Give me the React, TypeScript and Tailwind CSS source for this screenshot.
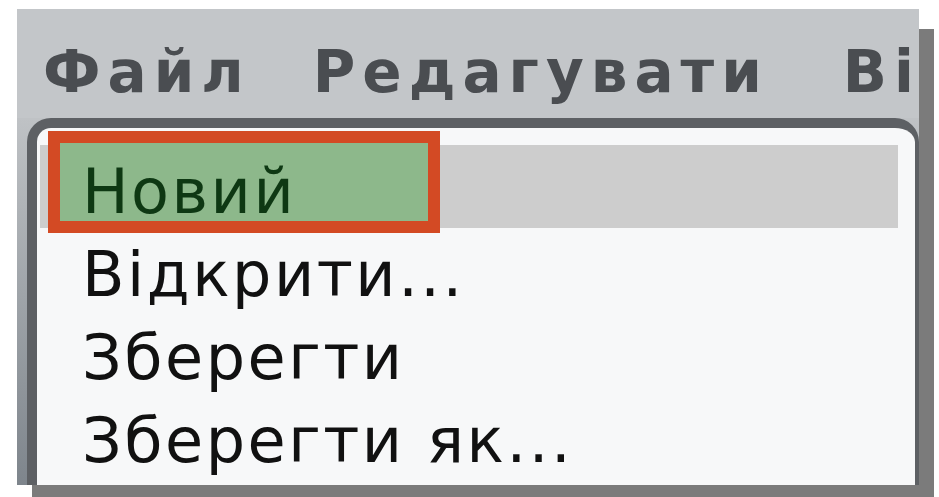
export default function App() {
  const items = ["Відкрити...", "Зберегти", "Зберегти як..."]

  return (
    <div className="w-[939px] h-[497px] overflow-hidden bg-white pl-[17px] pt-[9px] font-['DejaVu_Sans',sans-serif]">
      {/* window snapshot with its drop shadow */}
      <div className="flex h-[476px] w-[902px] flex-col bg-[#c3c6c9] shadow-[15px_20px_0_#7b7b7b]">
        {/* menu bar */}
        <div className="flex h-[109px] shrink-0 gap-[62px] overflow-hidden whitespace-nowrap pl-[26px] pt-[34px] text-[58px] font-bold leading-none tracking-[7px] text-[#4a4d51]">
          <span>Файл</span>
          <span>Редагувати</span>
          <span className="ml-[12px]">Ві</span>
        </div>

        {/* dropdown under "Файл" */}
        <div className="flex flex-1 flex-col bg-gradient-to-b from-[#bfc2c5] to-[#7e858c] pl-[10px]">
          <div className="flex-1 rounded-t-[24px] border-l-[10px] border-r-[4px] border-t-[10px] border-[#5d6064] bg-[#f7f8f9] pt-[17px] text-[62px] tracking-[2.5px] text-[#111]">
            <div className="relative ml-[3px] mr-[17px] h-[83px] bg-[#cdcdcd]">
              <div className="absolute left-[8px] top-[-14px] h-[102px] w-[392px] border-[12px] border-[#d34a24] bg-[#8db88b]" />
              <div className="relative pl-[42px] pt-[10px] leading-[73px] text-[#0e3813]">Новий</div>
            </div>
            {items.map((label) => (
              <div key={label} className="h-[83px] pl-[45px] pt-[10px] leading-[73px] whitespace-nowrap">
                {label}
              </div>
            ))}
          </div>
        </div>
      </div>
    </div>
  )
}
